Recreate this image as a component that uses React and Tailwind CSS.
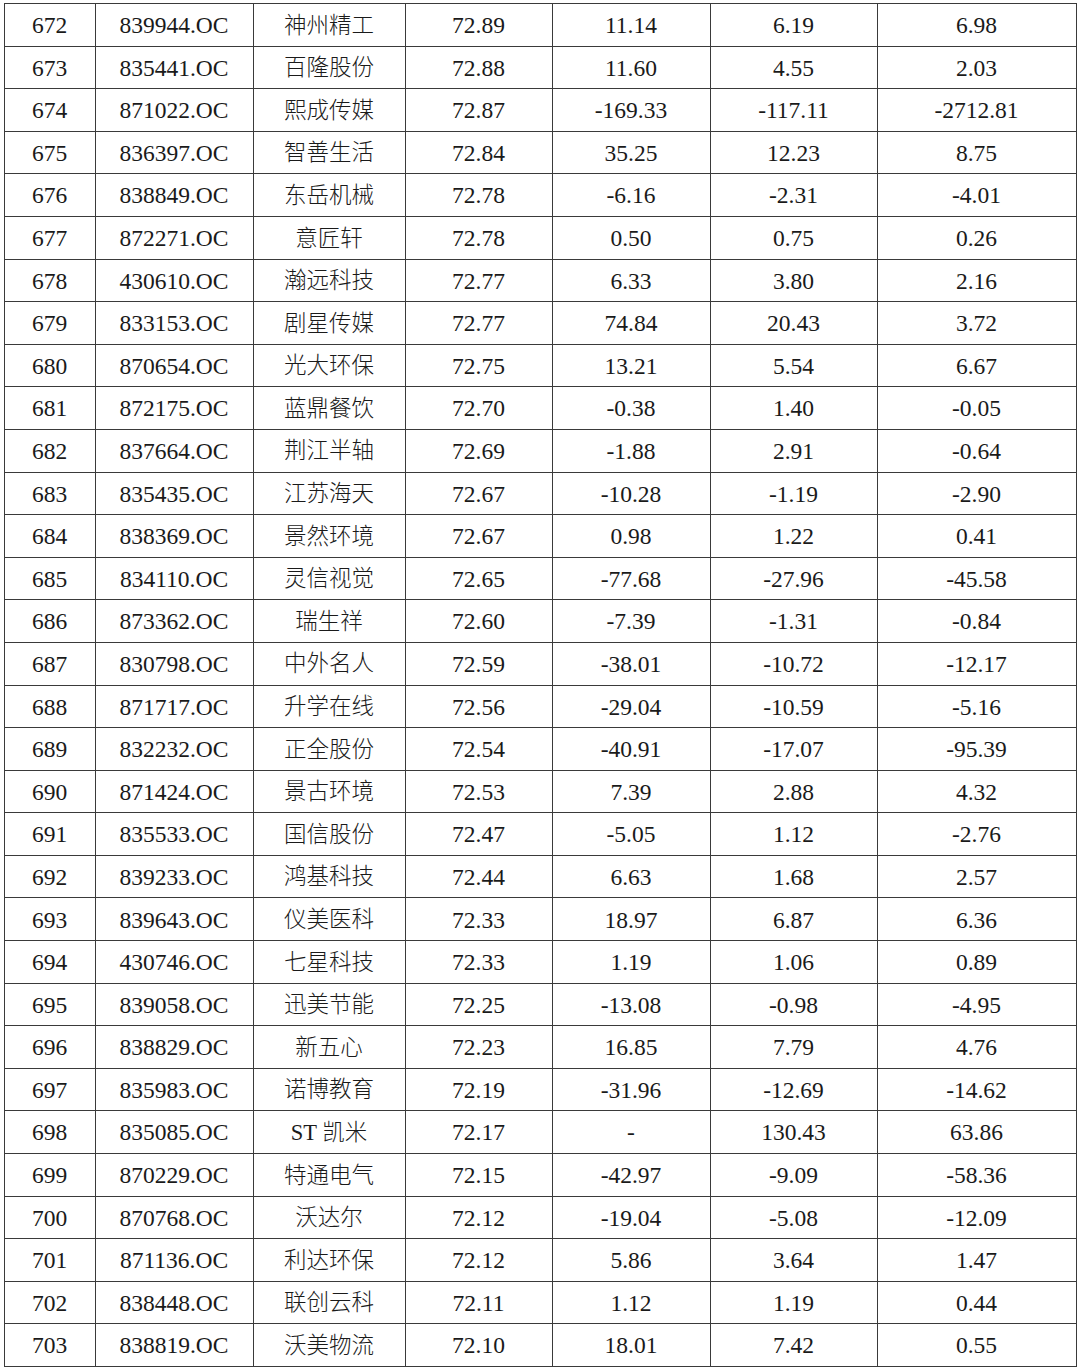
import React from 'react';

const rows = [
  ['672', '839944.OC', '神州精工', '72.89', '11.14', '6.19', '6.98'],
  ['673', '835441.OC', '百隆股份', '72.88', '11.60', '4.55', '2.03'],
  ['674', '871022.OC', '熙成传媒', '72.87', '-169.33', '-117.11', '-2712.81'],
  ['675', '836397.OC', '智善生活', '72.84', '35.25', '12.23', '8.75'],
  ['676', '838849.OC', '东岳机械', '72.78', '-6.16', '-2.31', '-4.01'],
  ['677', '872271.OC', '意匠轩', '72.78', '0.50', '0.75', '0.26'],
  ['678', '430610.OC', '瀚远科技', '72.77', '6.33', '3.80', '2.16'],
  ['679', '833153.OC', '剧星传媒', '72.77', '74.84', '20.43', '3.72'],
  ['680', '870654.OC', '光大环保', '72.75', '13.21', '5.54', '6.67'],
  ['681', '872175.OC', '蓝鼎餐饮', '72.70', '-0.38', '1.40', '-0.05'],
  ['682', '837664.OC', '荆江半轴', '72.69', '-1.88', '2.91', '-0.64'],
  ['683', '835435.OC', '江苏海天', '72.67', '-10.28', '-1.19', '-2.90'],
  ['684', '838369.OC', '景然环境', '72.67', '0.98', '1.22', '0.41'],
  ['685', '834110.OC', '灵信视觉', '72.65', '-77.68', '-27.96', '-45.58'],
  ['686', '873362.OC', '瑞生祥', '72.60', '-7.39', '-1.31', '-0.84'],
  ['687', '830798.OC', '中外名人', '72.59', '-38.01', '-10.72', '-12.17'],
  ['688', '871717.OC', '升学在线', '72.56', '-29.04', '-10.59', '-5.16'],
  ['689', '832232.OC', '正全股份', '72.54', '-40.91', '-17.07', '-95.39'],
  ['690', '871424.OC', '景古环境', '72.53', '7.39', '2.88', '4.32'],
  ['691', '835533.OC', '国信股份', '72.47', '-5.05', '1.12', '-2.76'],
  ['692', '839233.OC', '鸿基科技', '72.44', '6.63', '1.68', '2.57'],
  ['693', '839643.OC', '仪美医科', '72.33', '18.97', '6.87', '6.36'],
  ['694', '430746.OC', '七星科技', '72.33', '1.19', '1.06', '0.89'],
  ['695', '839058.OC', '迅美节能', '72.25', '-13.08', '-0.98', '-4.95'],
  ['696', '838829.OC', '新五心', '72.23', '16.85', '7.79', '4.76'],
  ['697', '835983.OC', '诺博教育', '72.19', '-31.96', '-12.69', '-14.62'],
  ['698', '835085.OC', 'ST 凯米', '72.17', '-', '130.43', '63.86'],
  ['699', '870229.OC', '特通电气', '72.15', '-42.97', '-9.09', '-58.36'],
  ['700', '870768.OC', '沃达尔', '72.12', '-19.04', '-5.08', '-12.09'],
  ['701', '871136.OC', '利达环保', '72.12', '5.86', '3.64', '1.47'],
  ['702', '838448.OC', '联创云科', '72.11', '1.12', '1.19', '0.44'],
  ['703', '838819.OC', '沃美物流', '72.10', '18.01', '7.42', '0.55'],
];

const widths = ['w-[91px]', 'w-[158px]', 'w-[152px]', 'w-[147px]', 'w-[158px]', 'w-[167px]', 'w-[199px]'];

const App = () => {
  return (
    <div className="w-[1080px] h-[1369px] bg-white pt-[3px] pl-[3.5px]">
      <table
        className="border-collapse table-fixed text-[#1a1a1a] text-[23.5px] leading-none"
        style={{ fontFamily: '"Liberation Serif", "Noto Sans CJK SC", serif' }}
      >
        <colgroup>
          {widths.map((w, i) => (
            <col key={i} className={w} />
          ))}
        </colgroup>
        <tbody>
          {rows.map((row) => (
            <tr key={row[0]} className="h-[42.6px]">
              {row.map((cell, j) => (
                <td
                  key={j}
                  className={`border-[1.5px] border-[#3a3a3a] text-center align-middle p-0 pt-[2px] ${widths[j]} ${
                    j === 2 ? 'text-[22.5px] font-light' : ''
                  }`}
                >
                  {cell}
                </td>
              ))}
            </tr>
          ))}
        </tbody>
      </table>
    </div>
  );
};

export default App;
